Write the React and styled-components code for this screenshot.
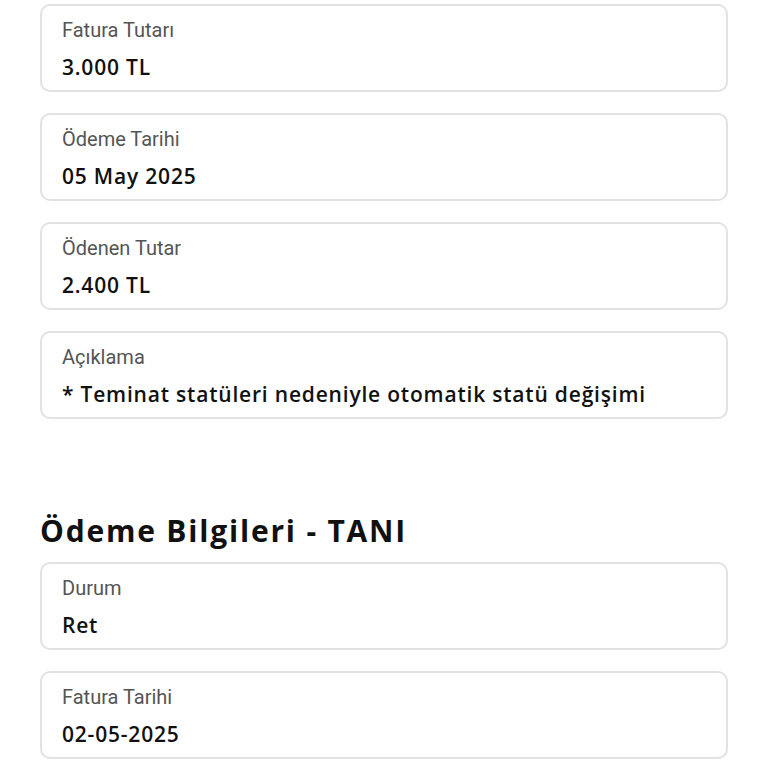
import styled, { createGlobalStyle } from "styled-components"

const GlobalStyle = createGlobalStyle`
  body {
    margin: 0;
    background: #fff;
  }
`

const fields = [
  { label: "Fatura Tutarı", value: "3.000 TL" },
  { label: "Ödeme Tarihi", value: "05 May 2025" },
  { label: "Ödenen Tutar", value: "2.400 TL" },
  { label: "Açıklama", value: "* Teminat statüleri nedeniyle otomatik statü değişimi" },
]

const tani = [
  { label: "Durum", value: "Ret" },
  { label: "Fatura Tarihi", value: "02-05-2025" },
]

function InfoCard({ label, value }) {
  return (
    <Card>
      <Label>{label}</Label>
      <Value>{value}</Value>
    </Card>
  )
}

export default function App() {
  return (
    <Page>
      <GlobalStyle />
      <List>
        {fields.map((f) => (
          <InfoCard key={f.label} {...f} />
        ))}
      </List>
      <Heading>Ödeme Bilgileri - TANI</Heading>
      <List>
        {tani.map((f) => (
          <InfoCard key={f.label} {...f} />
        ))}
      </List>
    </Page>
  )
}

const Page = styled.div`
  width: 768px;
  height: 768px;
  overflow: hidden;
  box-sizing: border-box;
  padding: 4px 40px 0 40px;
  display: flex;
  flex-direction: column;
`

const List = styled.div`
  display: flex;
  flex-direction: column;
  gap: 21px;
`

const Card = styled.div`
  box-sizing: border-box;
  height: 88px;
  border: 2px solid #e2e2e2;
  border-radius: 10px;
  padding: 12px 20px 0 20px;
  display: flex;
  flex-direction: column;
  gap: 11px;
`

const Label = styled.div`
  font-family: Roboto, "Liberation Sans", sans-serif;
  font-size: 20px;
  line-height: 24px;
  color: #555;
`

const Value = styled.div`
  font-family: "Open Sans", "DejaVu Sans", sans-serif;
  font-weight: 600;
  font-size: 21px;
  line-height: 28px;
  letter-spacing: 0.8px;
  color: #111;
`

const Heading = styled.h2`
  margin: 94px 0 13px 0;
  font-family: "Open Sans", "DejaVu Sans", sans-serif;
  font-weight: 700;
  font-size: 30px;
  line-height: 36px;
  letter-spacing: 1.8px;
  color: #111;
`
